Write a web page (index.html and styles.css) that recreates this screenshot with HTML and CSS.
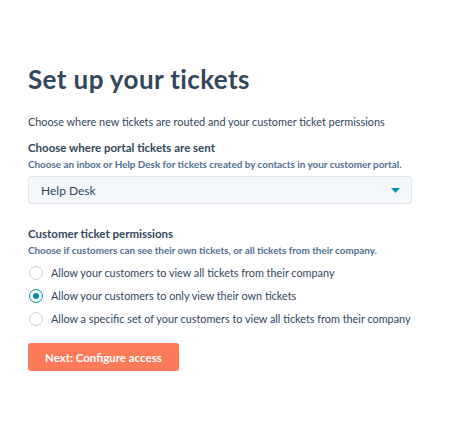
FILE: index.html
```html
<!DOCTYPE html>
<html lang="en">
<head>
    <meta charset="UTF-8">
    <meta name="viewport" content="width=device-width, initial-scale=1.0">
    <title>Set up your tickets</title>
    <link rel="stylesheet" href="styles.css">
</head>
<body>
    <div class="setup">
        <h1>Set up your tickets</h1>
        <p class="intro">Choose where new tickets are routed and your customer ticket permissions</p>

        <div class="field">
            <label class="field-label">Choose where portal tickets are sent</label>
            <div class="field-help">Choose an inbox or Help Desk for tickets created by contacts in your customer portal.</div>
            <div class="select">
                <span>Help Desk</span>
                <svg class="caret" width="9" height="5" viewBox="0 0 9 5">
                    <path d="M0 0 H9 L4.5 5 Z" fill="#0091ae"/>
                </svg>
            </div>
        </div>

        <div class="field">
            <div class="field-label">Customer ticket permissions</div>
            <div class="field-help">Choose if customers can see their own tickets, or all tickets from their company.</div>
            <div class="radios">
                <label class="radio"><span class="dot"></span>Allow your customers to view all tickets from their company</label>
                <label class="radio checked"><span class="dot"></span>Allow your customers to only view their own tickets</label>
                <label class="radio"><span class="dot"></span>Allow a specific set of your customers to view all tickets from their company</label>
            </div>
        </div>

        <button class="next">Next: Configure access</button>
    </div>
</body>
</html>
```

FILE: styles.css
```css
body {
    margin: 0;
    font-family: 'Lato', sans-serif;
    background-color: #fff;
    color: #33475b;
}

.setup {
    padding: 62px 0 0 28px;
    width: 384px;
}

h1 {
    margin: 0;
    font-size: 26px;
    font-weight: 700;
    line-height: 34px;
    letter-spacing: 0.4px;
    color: #33475b;
}

.intro {
    margin: 18px 0 0 0;
    font-size: 10.85px;
    line-height: 16px;
    white-space: nowrap;
}

.field {
    margin-top: 10px;
}

.field + .field {
    margin-top: 22px;
}

.field-label {
    display: block;
    font-size: 11.5px;
    font-weight: 700;
    line-height: 16px;
}

.field-help {
    font-size: 9.9px;
    font-weight: 700;
    line-height: 16px;
    color: #516f90;
    white-space: nowrap;
}

.select {
    margin-top: 4px;
    height: 26px;
    display: flex;
    align-items: center;
    justify-content: space-between;
    padding: 0 11px 0 12px;
    background-color: #f5f8fa;
    border: 1px solid #dfe3eb;
    border-radius: 3px;
    font-size: 12px;
}

.radios {
    margin-top: 7px;
    display: flex;
    flex-direction: column;
    gap: 7px;
}

.radio {
    display: flex;
    align-items: center;
    gap: 8px;
    font-size: 10.85px;
    line-height: 16px;
    white-space: nowrap;
}

.dot {
    box-sizing: border-box;
    width: 14px;
    height: 14px;
    margin-left: 1px;
    border: 1px solid #cbd6e2;
    border-radius: 50%;
    background-color: #fff;
    flex-shrink: 0;
    display: flex;
    align-items: center;
    justify-content: center;
}

.radio.checked .dot {
    border: 1.5px solid #0091ae;
}

.radio.checked .dot::after {
    content: '';
    width: 6px;
    height: 6px;
    border-radius: 50%;
    background-color: #0091ae;
}

.next {
    margin-top: 16px;
    height: 28px;
    padding: 0 17px;
    font-family: 'Lato', sans-serif;
    font-size: 11.5px;
    font-weight: 700;
    color: #fff;
    background-color: #ff7a59;
    border: none;
    border-radius: 3px;
    cursor: pointer;
}
```
